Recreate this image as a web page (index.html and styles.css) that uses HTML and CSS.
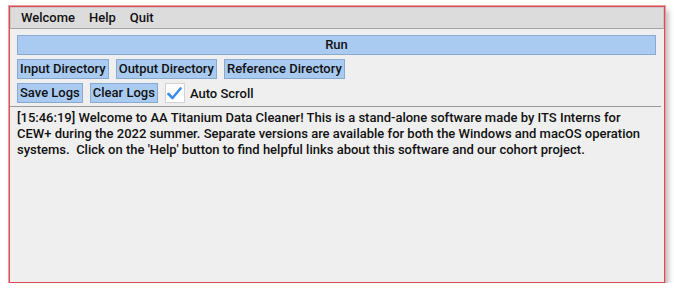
FILE: index.html
```html
<!DOCTYPE html>
<html lang="en">
<head>
    <meta charset="UTF-8">
    <title>AA Titanium Data Cleaner</title>
    <link rel="stylesheet" href="styles.css">
</head>
<body>
    <div class="window">
        <div class="menubar">
            <span class="menu-item">Welcome</span>
            <span class="menu-item">Help</span>
            <span class="menu-item">Quit</span>
        </div>
        <div class="controls">
            <button class="btn run-btn">Run</button>
            <div class="btn-row">
                <button class="btn">Input Directory</button>
                <button class="btn">Output Directory</button>
                <button class="btn">Reference Directory</button>
            </div>
            <div class="btn-row">
                <button class="btn">Save Logs</button>
                <button class="btn">Clear Logs</button>
                <label class="check">
                    <span class="check-box">
                        <svg width="15" height="13" viewBox="0 0 15 13">
                            <path d="M1.5 7 L5.5 11 L13.5 1.5" fill="none" stroke="#3d8ee6" stroke-width="2.6" stroke-linecap="round" stroke-linejoin="round"/>
                        </svg>
                    </span>
                    Auto Scroll
                </label>
            </div>
        </div>
        <div class="log">[15:46:19] Welcome to AA Titanium Data Cleaner! This is a stand-alone software made by ITS Interns for CEW+ during the 2022 summer. Separate versions are available for both the Windows and macOS operation systems.&nbsp; Click on the 'Help' button to find helpful links about this software and our cohort project.</div>
    </div>
</body>
</html>
```

FILE: styles.css
```css
body {
    margin: 0;
    padding: 6px 0 0 9px;
    background-color: #ffffff;
    font-family: Roboto, "Liberation Sans", sans-serif;
    font-size: 13px;
    font-weight: 500;
    color: #111111;
}

.window {
    width: 654px;
    height: 275px;
    border: 1px solid #e04a55;
    outline: 1px solid #e9a0a5;
    box-shadow: 3px 4px 6px rgba(0, 0, 0, 0.3);
    background-color: #efefef;
    display: flex;
    flex-direction: column;
}

.menubar {
    display: flex;
    gap: 14px;
    height: 20px;
    align-items: center;
    padding: 0 10px;
    background-color: #dcdcdc;
    border: 1px solid #c9c9c9;
    border-bottom-color: #a3a3a3;
}

.menu-item {
    line-height: 20px;
}

.controls {
    display: flex;
    flex-direction: column;
    gap: 4px;
    padding: 6px 8px 3px 7px;
}

.btn-row {
    display: flex;
    gap: 7px;
    align-items: center;
}

.btn {
    font-family: inherit;
    font-size: 13px;
    font-weight: 500;
    color: #111111;
    height: 20px;
    padding: 0 2px;
    margin: 0;
    background-color: #a9cbf2;
    border: 1px solid #8aa9cf;
    border-radius: 0;
    line-height: 18px;
}

.run-btn {
    width: 100%;
}

.check {
    display: flex;
    align-items: center;
    gap: 5px;
}

.check-box {
    width: 18px;
    height: 18px;
    background-color: #ffffff;
    border: 1px solid #d2d2d2;
    display: flex;
    align-items: center;
    justify-content: center;
}

.log {
    margin: 0 3px 0 0;
    border-top: 1px solid #9a9a9a;
    padding: 3px 6px 0 7px;
    line-height: 16px;
}
```
